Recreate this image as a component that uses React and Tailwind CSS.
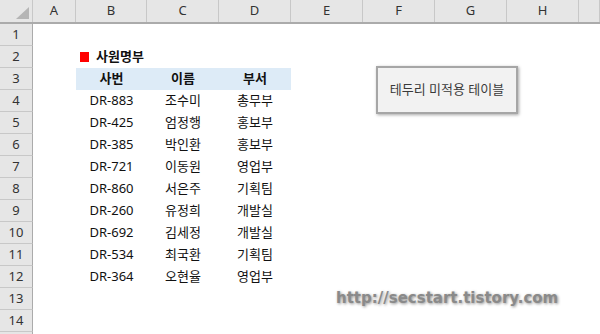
const cols = [
  { k: "A", w: "w-[43px]" },
  { k: "B", w: "w-[71px]" },
  { k: "C", w: "w-[72px]" },
  { k: "D", w: "w-[72px]" },
  { k: "E", w: "w-[72px]" },
  { k: "F", w: "w-[72px]" },
  { k: "G", w: "w-[72px]" },
  { k: "H", w: "w-[72px]" },
  { k: "", w: "w-[21px]" },
];

const staff = [
  ["DR-883", "조수미", "총무부"],
  ["DR-425", "엄정행", "홍보부"],
  ["DR-385", "박인환", "홍보부"],
  ["DR-721", "이동원", "영업부"],
  ["DR-860", "서은주", "기획팀"],
  ["DR-260", "유정희", "개발실"],
  ["DR-692", "김세정", "개발실"],
  ["DR-534", "최국환", "기획팀"],
  ["DR-364", "오현율", "영업부"],
];

const RowHead = ({ n }) => (
  <div className="w-[33px] shrink-0 h-full bg-[#e6e6e6] border-r border-r-[#ababab] border-b border-b-[#c8c8c8] flex items-center justify-center text-[13px] text-[#333]">
    {n}
  </div>
);

const Cell = ({ w, children, className = "" }) => (
  <div className={`${w} shrink-0 h-full flex items-center ${className}`}>{children}</div>
);

export default function App() {
  const rows = [];
  for (let i = 1; i <= 15; i++) {
    let cells = null;
    if (i === 2) {
      cells = (
        <>
          <Cell w="w-[43px]" />
          <Cell w="w-[216px]" className="pl-[4px] gap-[7px] font-bold text-[13px]">
            <span className="w-[9px] h-[10px] bg-[#ff0000]" />
            사원명부
          </Cell>
        </>
      );
    } else if (i === 3) {
      cells = (
        <>
          <Cell w="w-[43px]" />
          {["사번", "이름", "부서"].map((t, j) => (
            <Cell key={t} w={j === 0 ? "w-[71px]" : "w-[72px]"} className="justify-center bg-[#ddebf7] font-bold text-[13px]">
              {t}
            </Cell>
          ))}
        </>
      );
    } else if (i >= 4 && i <= 12) {
      const r = staff[i - 4];
      cells = (
        <>
          <Cell w="w-[43px]" />
          {r.map((t, j) => (
            <Cell key={j} w={j === 0 ? "w-[71px]" : "w-[72px]"} className="justify-center text-[13px]">
              {t}
            </Cell>
          ))}
        </>
      );
    }
    rows.push(
      <div key={i} className="flex h-[22px]">
        <RowHead n={i < 15 ? i : ""} />
        {cells}
      </div>
    );
  }

  return (
    <div
      className="relative w-[600px] h-[334px] overflow-hidden bg-white text-[#111]"
      style={{ fontFamily: '"Noto Sans", "Noto Sans CJK KR", sans-serif' }}
    >
      <div className="flex h-[24px] bg-[#e6e6e6] border-b-2 border-b-[#ababab]">
        <div className="w-[33px] shrink-0 border-r border-r-[#c8c8c8] flex items-end justify-end pr-[3px] pb-[3px]">
          <svg width="13" height="12" viewBox="0 0 13 12">
            <polygon points="13,0 13,12 0,12" fill="#b5b5b5" />
          </svg>
        </div>
        {cols.map((c) => (
          <div
            key={c.k}
            className={`${c.w} shrink-0 border-r border-r-[#c8c8c8] flex items-center justify-center text-[13px] text-[#333]`}
          >
            {c.k}
          </div>
        ))}
      </div>
      {rows}

      <div className="absolute left-[376px] top-[66px] w-[142px] h-[48px] bg-[#f2f2f2] border-2 border-[#a6a6a6] shadow-[1px_1px_3px_rgba(0,0,0,0.35)] flex items-center justify-center text-[13px] text-[#3a3a3a]">
        테두리 미적용 테이블
      </div>

      <div
        className="absolute left-[336px] top-[287px] text-[15px] font-bold text-[#8a8a8a] [text-shadow:1px_1px_3px_rgba(0,0,0,0.45)]"
        style={{ fontFamily: '"DejaVu Sans", Verdana, sans-serif' }}
      >
        http://secstart.tistory.com
      </div>
    </div>
  );
}
